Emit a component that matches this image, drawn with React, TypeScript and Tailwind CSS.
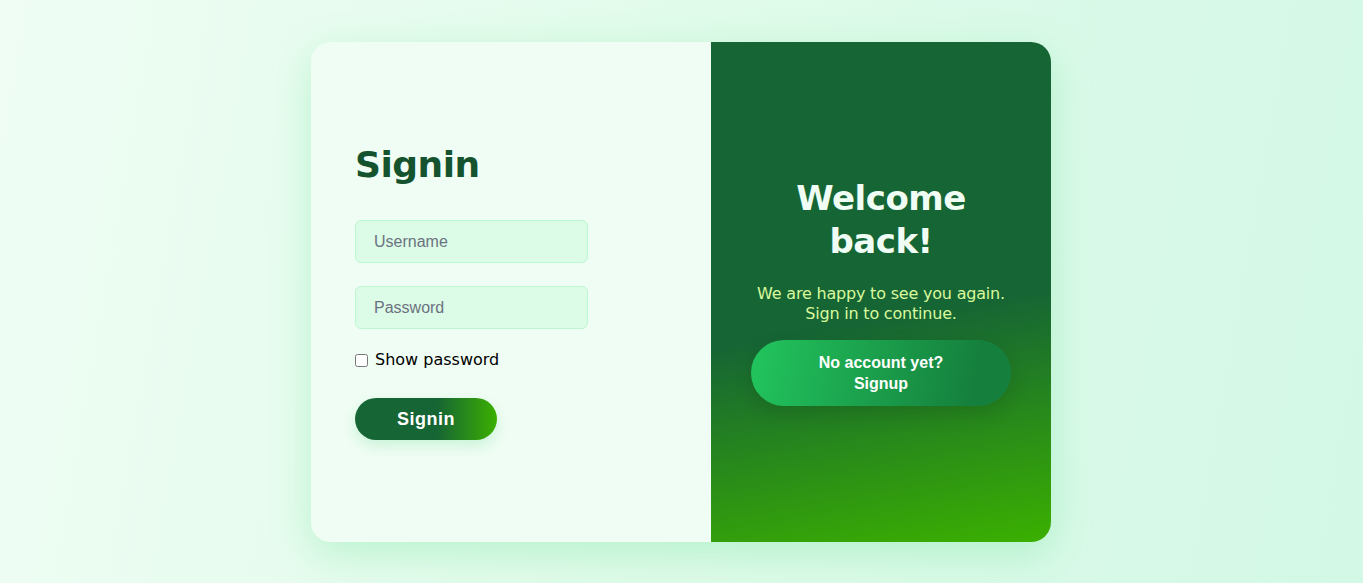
import { useState } from "react"

export default function App() {
  const [show, setShow] = useState(false)

  return (
    <div className="min-h-screen w-full flex items-center justify-center pr-[1px] bg-[linear-gradient(100deg,#effdf4_0%,#e0fbea_50%,#d3f8e6_100%)] font-['DejaVu_Sans',sans-serif]">
      <div className="flex w-[740px] h-[500px] rounded-[20px] overflow-hidden shadow-[0_12px_40px_rgba(74,222,128,0.28)]">
        {/* Left: form */}
        <div className="w-[400px] bg-[#f0fdf4] flex flex-col justify-center pl-[44px] pb-[2px]">
          <h1 className="text-[36px] font-bold text-[#14532d] leading-none tracking-[-0.5px] mb-[37px] mt-[6px]">Signin</h1>

          <input
            type="text"
            placeholder="Username"
            className="w-[233px] h-[43px] rounded-[6px] bg-[#dcfce7] border border-[#bbf7d0] px-[18px] text-[16px] font-['Liberation_Sans',sans-serif] text-[#374151] placeholder:text-[#6b7280] outline-none"
          />
          <input
            type={show ? "text" : "password"}
            placeholder="Password"
            className="w-[233px] h-[43px] mt-[23px] rounded-[6px] bg-[#dcfce7] border border-[#bbf7d0] px-[18px] text-[16px] font-['Liberation_Sans',sans-serif] text-[#374151] placeholder:text-[#6b7280] outline-none"
          />

          <label className="flex items-center gap-[7px] mt-[23px] text-[16px] text-black leading-none">
            <input
              type="checkbox"
              checked={show}
              onChange={(e) => setShow(e.target.checked)}
              className="w-[13px] h-[13px] m-0"
            />
            Show password
          </label>

          <button className="mt-[30px] w-[142px] h-[42px] rounded-full text-white text-[18px] font-bold tracking-[0.5px] font-['Liberation_Sans',sans-serif] bg-[linear-gradient(90deg,#166534_58%,#3bb000_100%)] shadow-[0_6px_14px_rgba(34,197,94,0.18)]">
            Signin
          </button>
        </div>

        {/* Right: welcome */}
        <div className="w-[340px] flex flex-col items-center justify-center px-[40px] text-center bg-[linear-gradient(170deg,#166534_55%,#3bb000_100%)]">
          <h2 className="w-[200px] text-[34px] font-bold leading-[43px] text-[#f0fdf4] tracking-[-0.5px] mt-[1px]">Welcome back!</h2>
          <p className="mt-[21px] text-[16px] leading-[20px] text-[#d9f99d] tracking-[-0.2px]">
            We are happy to see you again.
            <br />
            Sign in to continue.
          </p>
          <button className="mt-[16px] mb-[2px] w-[260px] h-[66px] rounded-full text-white text-[16px] font-bold leading-[21px] font-['Liberation_Sans',sans-serif] bg-[linear-gradient(100deg,#22c55e_0%,#15803d_85%)] shadow-[0_8px_20px_rgba(0,0,0,0.12)]">
            No account yet?
            <br />
            Signup
          </button>
        </div>
      </div>
    </div>
  )
}
